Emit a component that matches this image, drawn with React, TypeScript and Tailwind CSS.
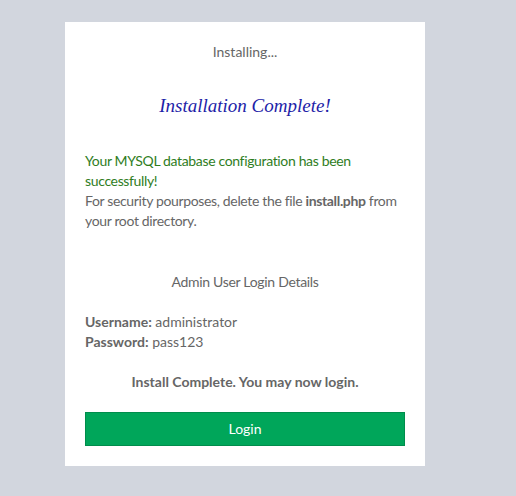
import React from "react";

const App = () => {
  return (
    <div
      className="min-h-[496px] w-full bg-[#d2d6de] pt-[22px] pb-[30px]"
      style={{ fontFamily: '"Source Sans Pro", Lato, "Noto Sans", sans-serif' }}
    >
      <div className="ml-[65px] w-[360px] bg-white p-5 text-[14px] leading-5 text-[#666]">
        <p className="text-center">Installing...</p>
        <h2
          className="mt-[30px] text-center text-[19px] italic leading-7 text-[#1e1ea8]"
          style={{ fontFamily: '"Liberation Serif", serif' }}
        >
          Installation Complete!
        </h2>
        <div className="mt-[31px] tracking-[-0.35px]">
          <p className="text-[#2f7d1e]">
            Your MYSQL database configuration has been successfully!
          </p>
          <p>
            For security pourposes, delete the file{" "}
            <span className="font-bold">install.php</span> from your root
            directory.
          </p>
        </div>
        <p className="mt-[41px] text-center tracking-[-0.3px]">
          Admin User Login Details
        </p>
        <div className="mt-5">
          <p>
            <span className="font-bold">Username:</span> administrator
          </p>
          <p>
            <span className="font-bold">Password:</span> pass123
          </p>
        </div>
        <p className="mt-5 text-center font-bold">
          Install Complete. You may now login.
        </p>
        <button className="mt-5 h-[34px] w-full border border-[#008d4c] bg-[#00a65a] text-white">
          Login
        </button>
      </div>
    </div>
  );
};

export default App;
